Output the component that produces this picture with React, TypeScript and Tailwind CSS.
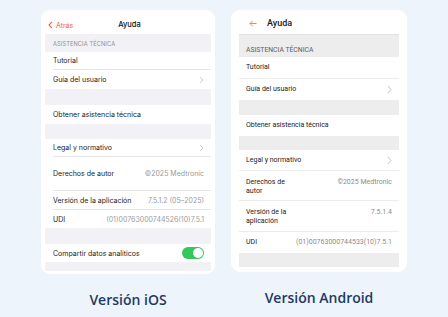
import React from 'react';

const iosFont = "font-['Inter',sans-serif]";
const droidFont = "font-['Roboto',sans-serif]";

function IosChevron() {
  return (
    <svg width="5" height="8" viewBox="0 0 5 8" className="shrink-0">
      <polyline points="1,1 4,4 1,7" fill="none" stroke="#c7c7cc" strokeWidth="0.9" />
    </svg>
  );
}

function DroidChevron() {
  return (
    <svg width="5" height="9" viewBox="0 0 5 9" className="shrink-0">
      <polyline points="1,1 4,4.5 1,8" fill="none" stroke="#bdbdbd" strokeWidth="0.9" />
    </svg>
  );
}

interface RowProps {
  label: React.ReactNode;
  value?: string;
  chevron?: boolean;
  h: string;
  last?: boolean;
  children?: React.ReactNode;
}

function IosRow({ label, value, chevron, h, last, children }: RowProps) {
  return (
    <div className="pl-2 bg-white">
      <div
        className={`${h} flex items-center justify-between pr-[7px] ${last ? '' : 'border-b border-[#e6e6ea]'}`}
      >
        <span className="text-[7px] leading-none text-[#1c1c1e]">{label}</span>
        {value && <span className="text-[7px] leading-none text-[#9a9aa0]">{value}</span>}
        {chevron && <IosChevron />}
        {children}
      </div>
    </div>
  );
}

function DroidRow({
  label,
  value,
  chevron,
  h,
  last,
  wrap,
}: RowProps & { wrap?: boolean }) {
  return (
    <div
      className={`${h} bg-white flex ${wrap ? 'items-start pt-[7px]' : 'items-center'} justify-between pl-[7px] pr-[7px] ${last ? '' : 'border-b border-[#ececec]'}`}
    >
      <span
        className={`text-[7px] leading-[8.5px] text-[#222222] ${wrap ? 'w-[48px]' : 'whitespace-nowrap'}`}
      >
        {label}
      </span>
      {value && (
        <span className="text-[7px] leading-[8.5px] text-[#8c8c8c] whitespace-nowrap">{value}</span>
      )}
      {chevron && <DroidChevron />}
    </div>
  );
}

function IosScreen() {
  return (
    <div className={`w-[174px] bg-white rounded-[9px] px-1 pb-[3px] ${iosFont}`}>
      <div className="h-[24px] pt-[6px] grid grid-cols-[1fr_auto_1fr] items-center pl-[3px]">
        <div className="flex items-center gap-[3px] text-[#f1613a]">
          <svg width="5" height="8" viewBox="0 0 5 8">
            <polyline points="4,0.8 1,4 4,7.2" fill="none" stroke="#f1613a" strokeWidth="1.1" />
          </svg>
          <span className="text-[7px] leading-none">Atrás</span>
        </div>
        <span className="text-[7.5px] leading-none font-medium text-[#111]">Ayuda</span>
        <div />
      </div>
      <div className="bg-[#f2f2f6]">
        <div className="h-[18px] flex items-end pb-[5px] pl-2 text-[5.7px] leading-none text-[#8e8e93] tracking-[0.1px]">
          ASISTENCIA TÉCNICA
        </div>
        <IosRow label="Tutorial" h="h-[18px]" />
        <IosRow label="Guía del usuario" chevron h="h-[19px]" last />
        <div className="h-[16px]" />
        <IosRow label="Obtener asistencia técnica" h="h-[19px]" last />
        <div className="h-[15px]" />
        <IosRow label="Legal y normativo" chevron h="h-[18px]" />
        <IosRow label="Derechos de autor" value="©2025 Medtronic" h="h-[34px]" />
        <IosRow label="Versión de la aplicación" value="7.5.1.2 (05–2025)" h="h-[19px]" />
        <IosRow label="UDI" value="(01)00763000744526(10)7.5.1" h="h-[18px]" last />
        <div className="h-[16px]" />
        <IosRow label="Compartir datos analíticos" h="h-[18px]" last>
          <div className="w-[22px] h-[12px] rounded-full bg-[#34c759] flex items-center justify-end pr-[1px]">
            <div className="w-[10px] h-[10px] rounded-full bg-white" />
          </div>
        </IosRow>
        <div className="h-[9px]" />
      </div>
    </div>
  );
}

function DroidScreen() {
  return (
    <div className={`w-[176px] bg-white rounded-[9px] px-2 pb-[5px] ${droidFont}`}>
      <div className="h-[25px] pt-[3px] flex items-center gap-[10px] pl-[10px] border-b border-[#e2e2e2]">
        <svg width="8" height="7" viewBox="0 0 8 7">
          <path d="M7.5 3.5H1M3.8 0.7L1 3.5l2.8 2.8" fill="none" stroke="#ea7a4e" strokeWidth="0.9" />
        </svg>
        <span className="text-[9px] leading-none font-medium text-[#1a1a1a]">Ayuda</span>
      </div>
      <div className="bg-[#ededed]">
        <div className="h-[22px] flex items-end pb-[3px] pl-[7px] text-[6.8px] leading-none text-[#606060]">
          ASISTENCIA TÉCNICA
        </div>
        <DroidRow label="Tutorial" h="h-[22px]" />
        <DroidRow label="Guía del usuario" chevron h="h-[21px]" last />
        <div className="h-[15px]" />
        <DroidRow label="Obtener asistencia técnica" h="h-[21px]" last />
        <div className="h-[14px]" />
        <DroidRow label="Legal y normativo" chevron h="h-[21px]" />
        <DroidRow label="Derechos de autor" value="©2025 Medtronic" h="h-[30px]" wrap />
        <DroidRow label="Versión de la aplicación" value="7.5.1.4" h="h-[31px]" wrap />
        <DroidRow label="UDI" value="(01)00763000744533(10)7.5.1" h="h-[21px]" last />
        <div className="h-[14px]" />
      </div>
    </div>
  );
}

export default function App() {
  return (
    <div className="w-[448px] h-[317px] bg-[#eef4fb] pt-[10px] pl-[41px] flex gap-4">
      <div className="flex flex-col">
        <IosScreen />
        <p className="mt-[16px] text-center text-[14px] leading-[20px] font-semibold text-[#1f3a63] font-['Open_Sans',sans-serif]">
          Versión iOS
        </p>
      </div>
      <div className="flex flex-col">
        <DroidScreen />
        <p className="mt-[16px] text-center text-[14px] leading-[20px] font-semibold text-[#1f3a63] font-['Open_Sans',sans-serif]">
          Versión Android
        </p>
      </div>
    </div>
  );
}
